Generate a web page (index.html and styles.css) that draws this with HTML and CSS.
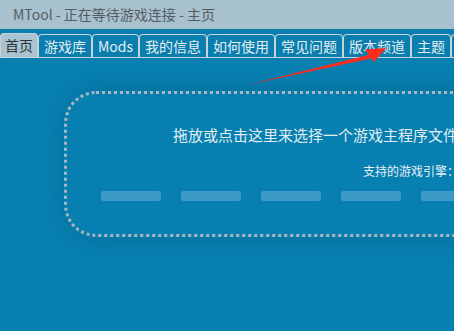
FILE: index.html
```html
<!DOCTYPE html>
<html>
<head>
<meta charset="utf-8">
<link rel="stylesheet" href="styles.css">
</head>
<body>
<div class="window">
  <div class="titlebar">MTool - 正在等待游戏连接 - 主页</div>
  <div class="tabbar">
    <div class="tab active">首页</div>
    <div class="tab">游戏库</div>
    <div class="tab">Mods</div>
    <div class="tab">我的信息</div>
    <div class="tab">如何使用</div>
    <div class="tab">常见问题</div>
    <div class="tab">版本频道</div>
    <div class="tab">主题</div>
    <div class="tab">更多</div>
  </div>
  <div class="content">
    <div class="dropzone">
      <div class="drop-text">拖放或点击这里来选择一个游戏主程序文件</div>
      <div class="engines-label">支持的游戏引擎：</div>
      <div class="engines">
        <span class="ph"></span><span class="ph"></span><span class="ph"></span><span class="ph"></span><span class="ph"></span>
      </div>
    </div>
  </div>
  <svg class="arrow" width="454" height="331" viewBox="0 0 454 331">
    <polygon points="247,85 370,54.5 371,58.5" fill="#ff2b1c"/>
    <polygon points="386,48 365,49.5 374,62" fill="#ff2b1c"/>
  </svg>
</div>
</body>
</html>
```
FILE: styles.css
```css
html, body {
  margin: 0;
  padding: 0;
  width: 454px;
  height: 331px;
  overflow: hidden;
  background: #0780b1;
  font-family: "Noto Sans CJK SC", "Noto Sans", sans-serif;
}
.window {
  position: relative;
  width: 454px;
  height: 331px;
  overflow: hidden;
}
.titlebar {
  height: 29px;
  background: #a7c1ce;
  color: #555d63;
  font-size: 14px;
  line-height: 29px;
  padding-left: 13px;
  box-sizing: border-box;
}
.tabbar {
  display: flex;
  gap: 0;
  background: #0a7eae;
  padding-top: 4px;
  height: 24px;
  border-bottom: 1px solid #c3d1d9;
  box-sizing: content-box;
  white-space: nowrap;
}
.tab {
  flex: none;
  height: 23px;
  box-sizing: border-box;
  border: 1px solid #c7d3da;
  border-bottom: none;
  border-radius: 4px 4px 0 0;
  padding: 0 5px;
  font-size: 14px;
  line-height: 22px;
  color: #e3eef4;
  margin-top: 1px;
}
.tab.active {
  background: #a9c3d0;
  color: #2c3338;
  margin-top: 0;
  height: 24px;
  padding: 0 4px;
}
.content {
  padding-top: 33px;
  padding-left: 64px;
}
.dropzone {
  width: 520px;
  height: 146px;
  box-sizing: border-box;
  border: 3px dotted #a9b6be;
  border-radius: 32px;
  box-shadow: 0 0 22px rgba(0, 40, 70, 0.22);
  padding-top: 31px;
}
.drop-text {
  padding-left: 106px;
  font-size: 15px;
  line-height: 20px;
  color: #e2edf3;
}
.engines-label {
  padding-left: 296px;
  margin-top: 17px;
  font-size: 12px;
  line-height: 18px;
  color: #e8f1f6;
}
.engines {
  display: flex;
  gap: 20px;
  padding-left: 34px;
  margin-top: 11px;
}
.ph {
  width: 60px;
  height: 10px;
  border-radius: 3px;
  background: #3b9bc6;
  flex: none;
}
.arrow {
  position: absolute;
  left: 0;
  top: 0;
  pointer-events: none;
}
```
